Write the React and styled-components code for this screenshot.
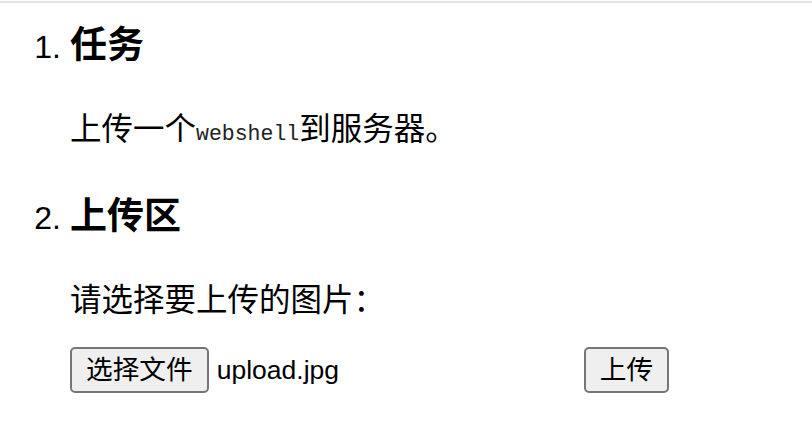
import React from "react";
import styled, { createGlobalStyle } from "styled-components";

const GlobalStyle = createGlobalStyle`
  html, body {
    margin: 0;
    padding: 0;
    background: #ffffff;
  }
  body {
    font-family: "Liberation Sans", "Noto Sans CJK SC", sans-serif;
    color: #000000;
  }
`;

const Page = styled.div`
  width: 812px;
  height: 428px;
  box-sizing: border-box;
  border-top: 2px solid #e3e3e3;
  margin-top: 1px;
  overflow: hidden;
`;

const List = styled.ol`
  margin: 0;
  padding: 21px 0 0 70px;
  list-style: none;
  counter-reset: step;
  display: flex;
  flex-direction: column;
  gap: 41px;
`;

const Item = styled.li`
  counter-increment: step;
  display: flex;
  flex-direction: column;
  gap: 41px;
`;

const Body = styled.div`
  display: flex;
  flex-direction: column;
  gap: 27px;
`;

const Heading = styled.h3`
  position: relative;
  margin: 0;
  font-size: 37px;
  line-height: 44px;
  font-weight: 700;
  &::before {
    content: counter(step) ".";
    position: absolute;
    right: calc(100% + 9px);
    top: 1px;
    font-weight: 400;
    font-size: 32px;
    font-family: "Liberation Sans", sans-serif;
  }
`;

const Para = styled.p`
  margin: 0;
  font-size: 31.5px;
  line-height: 40px;
`;

const Code = styled.code`
  font-family: "Liberation Mono", "DejaVu Sans Mono", monospace;
  font-size: 21.5px;
  color: #222;
`;

const Form = styled.form`
  display: flex;
  align-items: center;
  margin: 0;
`;

const Button = styled.button`
  box-sizing: border-box;
  height: 46px;
  padding: 0 14px;
  border: 2px solid #767676;
  border-radius: 5px;
  background: #efefef;
  color: #000;
  font-family: "Liberation Sans", "Noto Sans CJK SC", sans-serif;
  font-size: 26.7px;
  line-height: 40px;
  cursor: default;
`;

const FileName = styled.span`
  width: 367px;
  margin-left: 8px;
  font-size: 26.5px;
  line-height: 40px;
`;

export default function App() {
  return (
    <>
      <GlobalStyle />
      <Page>
        <List>
          <Item>
            <Heading>任务</Heading>
            <Para>
              上传一个<Code>webshell</Code>到服务器。
            </Para>
          </Item>
          <Item>
            <Heading>上传区</Heading>
            <Body>
              <Para>请选择要上传的图片：</Para>
              <Form onSubmit={(e) => e.preventDefault()}>
                <Button type="button">选择文件</Button>
                <FileName>upload.jpg</FileName>
                <Button type="submit">上传</Button>
              </Form>
            </Body>
          </Item>
        </List>
      </Page>
    </>
  );
}
